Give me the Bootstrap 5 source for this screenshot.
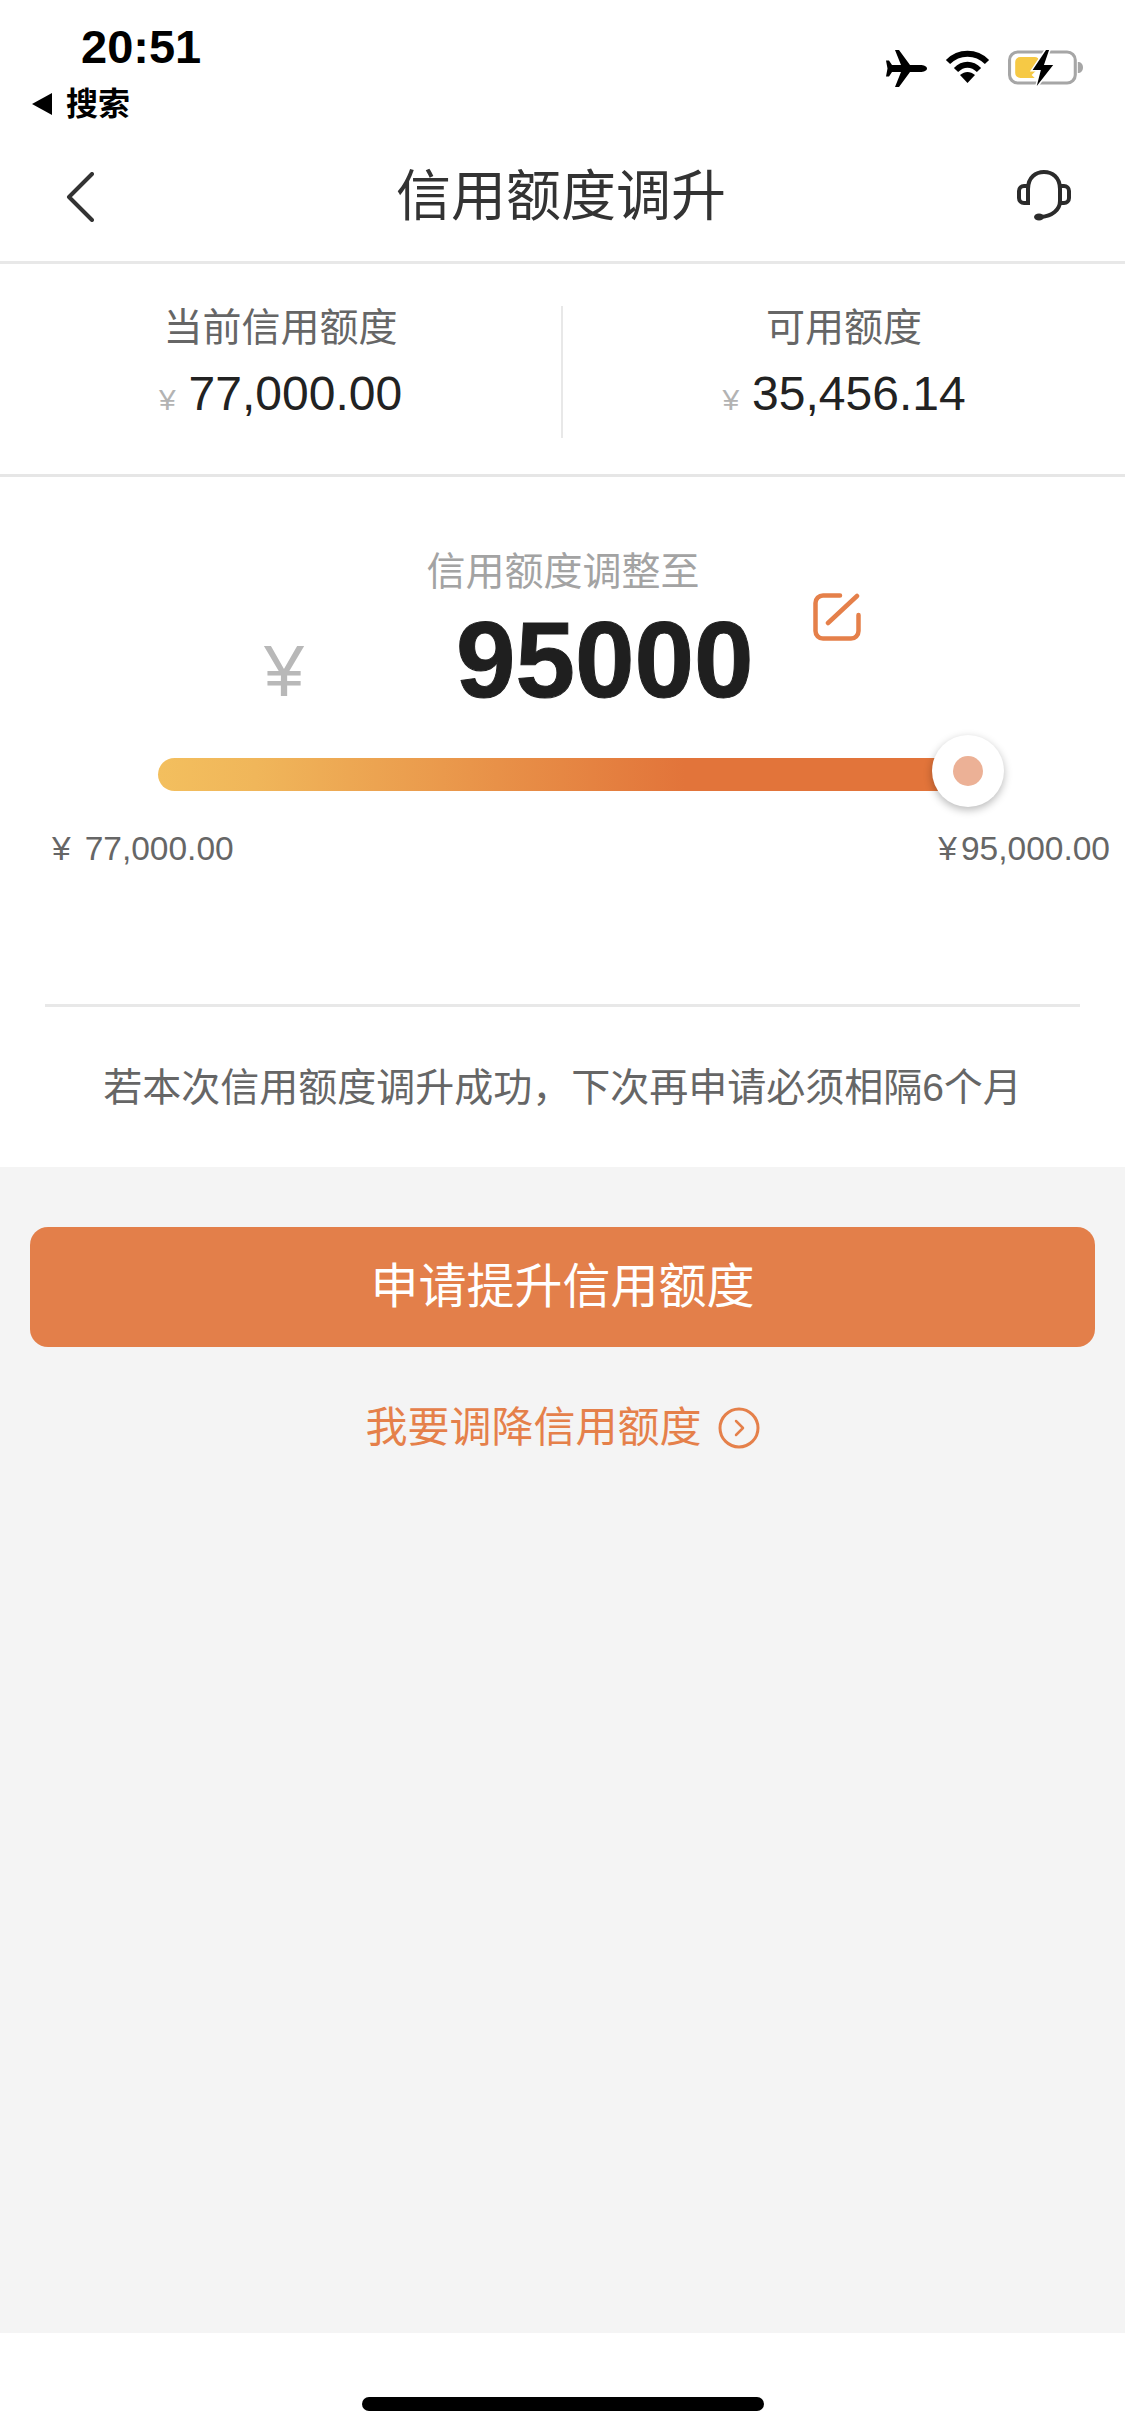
<!DOCTYPE html>
<html lang="zh-CN">
<head>
    <meta charset="UTF-8">
    <meta name="viewport" content="width=device-width, initial-scale=1.0">
    <title>信用额度调升</title>
    <link rel="stylesheet" href="https://cdn.jsdelivr.net/npm/bootstrap@5.3.3/dist/css/bootstrap.min.css">
    <script src="https://cdn.jsdelivr.net/npm/bootstrap@5.3.3/dist/js/bootstrap.bundle.min.js"></script>
    <style>
        html, body { background: #fff; }
        body {
            width: 1125px;
            height: 2436px;
            font-family: "Liberation Sans", "Noto Sans CJK SC", sans-serif;
            color: #333;
            overflow: hidden;
        }
        svg { display: block; flex: none; }
        .status-wrap { height: 130px; padding: 24px 41px 0 32px; }
        .status-time { font-size: 47px; line-height: 46px; font-weight: 700; color: #000; padding-left: 49px; }
        .status-back { font-size: 32px; line-height: 32px; font-weight: 700; color: #000; margin-top: 18px; gap: 14px; }
        .status-icons { margin-top: 26px; gap: 18px; }
        .top-bar { height: 134px; padding: 0 54px 0 66px; border-bottom: 3px solid #e8e8e8; }
        .top-back { margin-top: 2px; }
        .top-title { font-size: 55px; line-height: 64px; color: #333; margin-left: 11px; }
        .summary-box { height: 213px; border-bottom: 3px solid #e6e6e6; padding-top: 6px; }
        .summary-col { width: 561px; height: 132px; }
        .summary-col + .summary-col { border-left: 2px solid #e8e8e8; width: 564px; }
        .summary-label { font-size: 39px; line-height: 44px; color: #666; }
        .summary-num { font-size: 48px; line-height: 56px; color: #222; margin-top: 16px; }
        .yen-small { font-size: 30px; color: #b3b3b3; margin-right: 13px; }
        .adjust-box { height: 690px; padding-top: 73px; }
        .adjust-label { font-size: 39px; line-height: 44px; color: #a3a3a3; padding-left: 1px; }
        .amount-row { height: 155px; padding-left: 264px; }
        .yen-big { font-size: 72px; line-height: 72px; color: #b8b8b8; margin-top: 41px; width: 192px; }
        .amount-num { font-size: 107px; line-height: 110px; font-weight: 700; color: #1f1f1f; margin-top: 11px; width: 357px; -webkit-text-stroke: 1px #1f1f1f; }
        .amount-edit { margin-top: -1px; }
        .slider-wrap { margin: 9px 0 0 158px; width: 810px; }
        .slider-track { height: 33px; border-radius: 17px 0 0 17px; overflow: visible; background: transparent; }
        .slider-fill { background: linear-gradient(90deg, #f3bf5e 0%, #f0b65a 12%, #e2743a 65%, #e2743a 100%); border-radius: 17px 0 0 17px; }
        .slider-thumb {
            width: 72px;
            height: 72px;
            right: -36px;
            top: -23px;
            background: #fff;
            box-shadow: 0 3px 8px rgba(0, 0, 0, .28);
        }
        .slider-dot { width: 30px; height: 30px; background: #ecb196; }
        .range-row { padding: 38px 15px 0 52px; font-size: 33.5px; line-height: 40px; color: #666; }
        .range-yen { margin-right: 14px; }
        .range-yen-end { margin-right: 4px; }
        .tip-line { height: 3px; margin: 135px 45px 0; background: #e8e8e8; }
        .tip-text { font-size: 39px; line-height: 46px; color: #666; margin-top: 58px; }
        .grey-area { height: 1166px; background: #f4f4f4; padding: 60px 30px 0; }
        .apply-btn {
            height: 120px;
            font-size: 48px;
            line-height: 64px;
            color: #fff;
            background: #e37f4a;
            border: 0;
            border-radius: 18px;
        }
        .lower-link { font-size: 42px; line-height: 50px; color: #e5804a; margin-top: 56px; gap: 16px; text-decoration: none; }
        .home-wrap { height: 103px; padding-top: 64px; }
        .home-bar { width: 402px; height: 14px; background: #000; }
    </style>
</head>
<body>
    <!-- status bar -->
    <div class="status-wrap d-flex justify-content-between">
        <div>
            <div class="status-time">20:51</div>
            <div class="status-back d-flex align-items-center">
                <svg width="20" height="22" viewBox="0 0 20 22"><path d="M0 11 20 0V22Z" fill="#000"/></svg>
                <span>搜索</span>
            </div>
        </div>
        <div class="status-icons d-flex align-items-start">
            <svg width="41" height="37" viewBox="0 0 41 37"><path d="M41 18.5c0-2-3-3.500-7-3.500H24L13 0H9l6 15H6L3 10.500H0L1.500 18.500 0 26.500h3L6 22h9L9 37h4l11-15h10c4 0 7-1.500 7-3.500Z" fill="#000"/></svg>
            <svg width="45" height="33" viewBox="0 0 45 33" fill="none" stroke="#000" stroke-width="6">
                <path d="M3 12C14 1 31 1 42 12"/>
                <path d="M11 20C18 13 27 13 34 20"/>
                <path d="M22.500 33 15 25C20 21 25 21 30 25Z" fill="#000" stroke="none"/>
            </svg>
            <svg width="76" height="36" viewBox="0 0 74 36" preserveAspectRatio="none">
                <rect x="1.500" y="2" width="64" height="31" rx="8" fill="none" stroke="#a6a6a6" stroke-width="3"/>
                <path d="M68 12c3 0 5 2 5 5.500S71 23 68 23Z" fill="#a6a6a6"/>
                <path d="M7 12a5 5 0 0 1 5-5h14a4 4 0 0 1 4 4v7l-7 7 3 3H12a5 5 0 0 1-5-5Z" fill="#f6c945"/>
                <path d="M37 0 24 20h8l-4 16 16-21h-9l5-15Z" fill="#000" stroke="#fff" stroke-width="3" paint-order="stroke"/>
            </svg>
        </div>
    </div>

    <!-- top bar -->
    <div class="top-bar d-flex align-items-center justify-content-between">
        <svg class="top-back" width="28" height="50" viewBox="0 0 28 50" fill="none" stroke="#333" stroke-width="4" stroke-linecap="round" stroke-linejoin="round"><path d="M26 2 3 25l23 23"/></svg>
        <div class="top-title">信用额度调升</div>
        <svg width="54" height="52" viewBox="0 0 54 52" fill="none" stroke="#2b2b2b" stroke-width="4">
            <path d="M11 19C11 7 19 2 27 2s16 5 16 17v12c0 9-8 15-19 16"/>
            <path d="M11 16H7a5 5 0 0 0-5 5v7a5 5 0 0 0 5 5h4Z"/>
            <path d="M43 16h4a5 5 0 0 1 5 5v7a5 5 0 0 1-5 5h-4"/>
            <ellipse cx="22" cy="47" rx="5" ry="3.500" fill="#2b2b2b" stroke="none"/>
        </svg>
    </div>

    <!-- current limits -->
    <div class="summary-box d-flex align-items-center">
        <div class="summary-col text-center">
            <div class="summary-label">当前信用额度</div>
            <div class="summary-num"><span class="yen-small">¥</span>77,000.00</div>
        </div>
        <div class="summary-col text-center">
            <div class="summary-label">可用额度</div>
            <div class="summary-num"><span class="yen-small">¥</span>35,456.14</div>
        </div>
    </div>

    <!-- slider block -->
    <div class="adjust-box">
        <div class="adjust-label text-center">信用额度调整至</div>
        <div class="amount-row d-flex">
            <div class="yen-big">¥</div>
            <div class="amount-num">95000</div>
            <svg class="amount-edit" width="48" height="48" viewBox="0 0 48 48" fill="none" stroke="#e5804a" stroke-width="4.500" stroke-linecap="round">
                <path d="M27 2.500H10A7.500 7.500 0 0 0 2.500 10v28a7.500 7.500 0 0 0 7.500 7.500h28a7.500 7.500 0 0 0 7.500-7.500V22"/>
                <path d="M15 30 44 3"/>
            </svg>
        </div>
        <div class="slider-wrap">
            <div class="progress slider-track position-relative">
                <div class="progress-bar slider-fill w-100"></div>
                <div class="slider-thumb position-absolute rounded-circle d-flex align-items-center justify-content-center">
                    <div class="slider-dot rounded-circle"></div>
                </div>
            </div>
        </div>
        <div class="range-row d-flex justify-content-between">
            <div><span class="range-yen">¥</span>77,000.00</div>
            <div><span class="range-yen-end">¥</span>95,000.00</div>
        </div>
        <div class="tip-line"></div>
        <div class="tip-text text-center">若本次信用额度调升成功，下次再申请必须相隔6个月</div>
    </div>

    <!-- actions -->
    <div class="grey-area">
        <button type="button" class="btn apply-btn w-100 d-block">申请提升信用额度</button>
        <a href="#" class="lower-link d-flex align-items-center justify-content-center">
            <span>我要调降信用额度</span>
            <svg width="42" height="42" viewBox="0 0 42 42" fill="none" stroke="#e5804a" stroke-width="3" stroke-linecap="round" stroke-linejoin="round">
                <circle cx="21" cy="21" r="19"/>
                <path d="M18 14l7 7-7 7" stroke-width="2.500"/>
            </svg>
        </a>
    </div>

    <div class="home-wrap d-flex justify-content-center">
        <div class="home-bar rounded-pill"></div>
    </div>
</body>
</html>
